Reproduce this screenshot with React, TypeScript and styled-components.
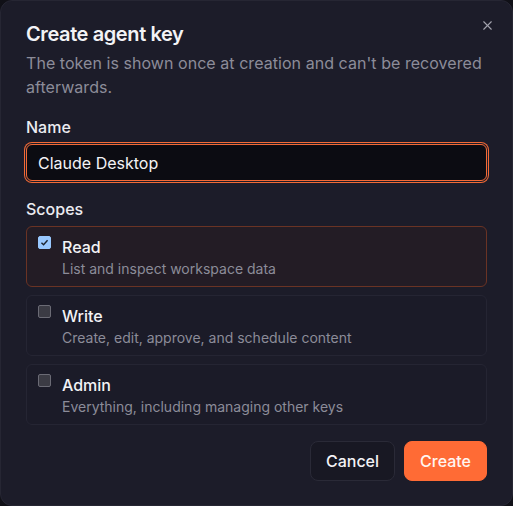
import { useState } from "react";
import styled, { createGlobalStyle } from "styled-components";
import { X } from "lucide-react";

const GlobalStyle = createGlobalStyle`
    html, body {
        margin: 0;
        padding: 0;
        background-color: #101017;
    }
    body {
        font-family: Inter, "Noto Sans", sans-serif;
        -webkit-font-smoothing: antialiased;
    }
`;

const DIALOG = styled.div`
    position: relative;
    box-sizing: border-box;
    width: 513px;
    height: 506px;
    background-color: #1c1c29;
    border: 1px solid #262633;
    border-radius: 12px;
    padding: 19px 25px 24px 25px;
    display: flex;
    flex-direction: column;
    color: #f3f3f6;
`;

const CloseButton = styled.button`
    position: absolute;
    top: 14px;
    right: 15px;
    width: 20px;
    height: 20px;
    padding: 0;
    border: none;
    background: none;
    color: #a3a3ae;
    display: flex;
    align-items: center;
    justify-content: center;
    cursor: pointer;
`;

const Title = styled.h2`
    margin: 0;
    font-size: 20px;
    line-height: 28px;
    font-weight: 600;
    letter-spacing: -0.4px;
`;

const Subtitle = styled.p`
    margin: 3px 0 0 0;
    font-size: 16px;
    line-height: 24px;
    letter-spacing: 0.05px;
    color: #8c8c99;
`;

const Label = styled.div`
    margin-top: 16px;
    margin-bottom: 5px;
    font-size: 16px;
    line-height: 24px;
    font-weight: 500;
    color: #ececf1;
`;

const TextInput = styled.input`
    box-sizing: border-box;
    width: 100%;
    height: 37px;
    margin: 0;
    padding: 0 11px;
    background-color: #0c0c12;
    border: 1px solid #f26a36;
    border-radius: 6px;
    box-shadow: 0 0 0 1px #1c1c29, 0 0 0 2px #f26a36;
    color: #f3f3f6;
    font-family: inherit;
    font-size: 16px;
    outline: none;
`;

const ScopeList = styled.div`
    display: flex;
    flex-direction: column;
    gap: 8px;
`;

const ScopeCard = styled.label<{ $checked: boolean }>`
    box-sizing: border-box;
    height: 61px;
    display: flex;
    align-items: flex-start;
    gap: 11px;
    padding: 8px 11px;
    border-radius: 6px;
    border: 1px solid ${(p) => (p.$checked ? "#6a3324" : "#252533")};
    background-color: ${(p) => (p.$checked ? "#231c25" : "#1b1b28")};
    cursor: pointer;
`;

const Box = styled.span<{ $checked: boolean }>`
    box-sizing: border-box;
    flex: none;
    width: 13px;
    height: 13px;
    margin-top: 1px;
    border-radius: 2px;
    display: flex;
    align-items: center;
    justify-content: center;
    background-color: ${(p) => (p.$checked ? "#99c8ff" : "#3b3b44")};
    border: 1px solid ${(p) => (p.$checked ? "#99c8ff" : "#6b6b75")};
`;

const ScopeText = styled.div`
    display: flex;
    flex-direction: column;
`;

const ScopeName = styled.span`
    font-size: 16px;
    line-height: 24px;
    font-weight: 500;
    color: #f3f3f6;
`;

const ScopeDesc = styled.span`
    font-size: 14px;
    line-height: 20px;
    color: #8c8c99;
`;

const Footer = styled.div`
    margin-top: 16px;
    display: flex;
    justify-content: flex-end;
    gap: 9px;
`;

const Button = styled.button<{ $primary?: boolean }>`
    box-sizing: border-box;
    height: 40px;
    padding: 0 15px;
    border-radius: 8px;
    font-family: inherit;
    font-size: 16px;
    font-weight: 500;
    cursor: pointer;
    border: 1px solid ${(p) => (p.$primary ? "#ff6b35" : "#2a2a37")};
    background-color: ${(p) => (p.$primary ? "#ff6b35" : "#181823")};
    color: ${(p) => (p.$primary ? "#fff6f0" : "#f3f3f6")};
`;

const scopes = [
    { id: "read", name: "Read", desc: "List and inspect workspace data" },
    { id: "write", name: "Write", desc: "Create, edit, approve, and schedule content" },
    { id: "admin", name: "Admin", desc: "Everything, including managing other keys" },
];

function Check() {
    return (
        <svg width="9" height="9" viewBox="0 0 10 10">
            <path d="M1.6 5.2 L4 7.5 L8.4 2.6" fill="none" stroke="#1b2330" strokeWidth="1.6" />
        </svg>
    );
}

export default function App() {
    const [name, setName] = useState("Claude Desktop");
    const [selected, setSelected] = useState<string[]>(["read"]);

    const toggle = (id: string) => {
        setSelected((s) => (s.includes(id) ? s.filter((x) => x !== id) : [...s, id]));
    };

    return (
        <>
            <GlobalStyle />
            <DIALOG>
                <CloseButton aria-label="Close">
                    <X size={15} strokeWidth={1.8} />
                </CloseButton>
                <Title>Create agent key</Title>
                <Subtitle>The token is shown once at creation and can't be recovered afterwards.</Subtitle>
                <Label>Name</Label>
                <TextInput value={name} onChange={(e) => setName(e.target.value)} />
                <Label>Scopes</Label>
                <ScopeList>
                    {scopes.map((s) => {
                        const on = selected.includes(s.id);
                        return (
                            <ScopeCard key={s.id} $checked={on} onClick={() => toggle(s.id)}>
                                <Box $checked={on}>{on && <Check />}</Box>
                                <ScopeText>
                                    <ScopeName>{s.name}</ScopeName>
                                    <ScopeDesc>{s.desc}</ScopeDesc>
                                </ScopeText>
                            </ScopeCard>
                        );
                    })}
                </ScopeList>
                <Footer>
                    <Button>Cancel</Button>
                    <Button $primary>Create</Button>
                </Footer>
            </DIALOG>
        </>
    );
}
